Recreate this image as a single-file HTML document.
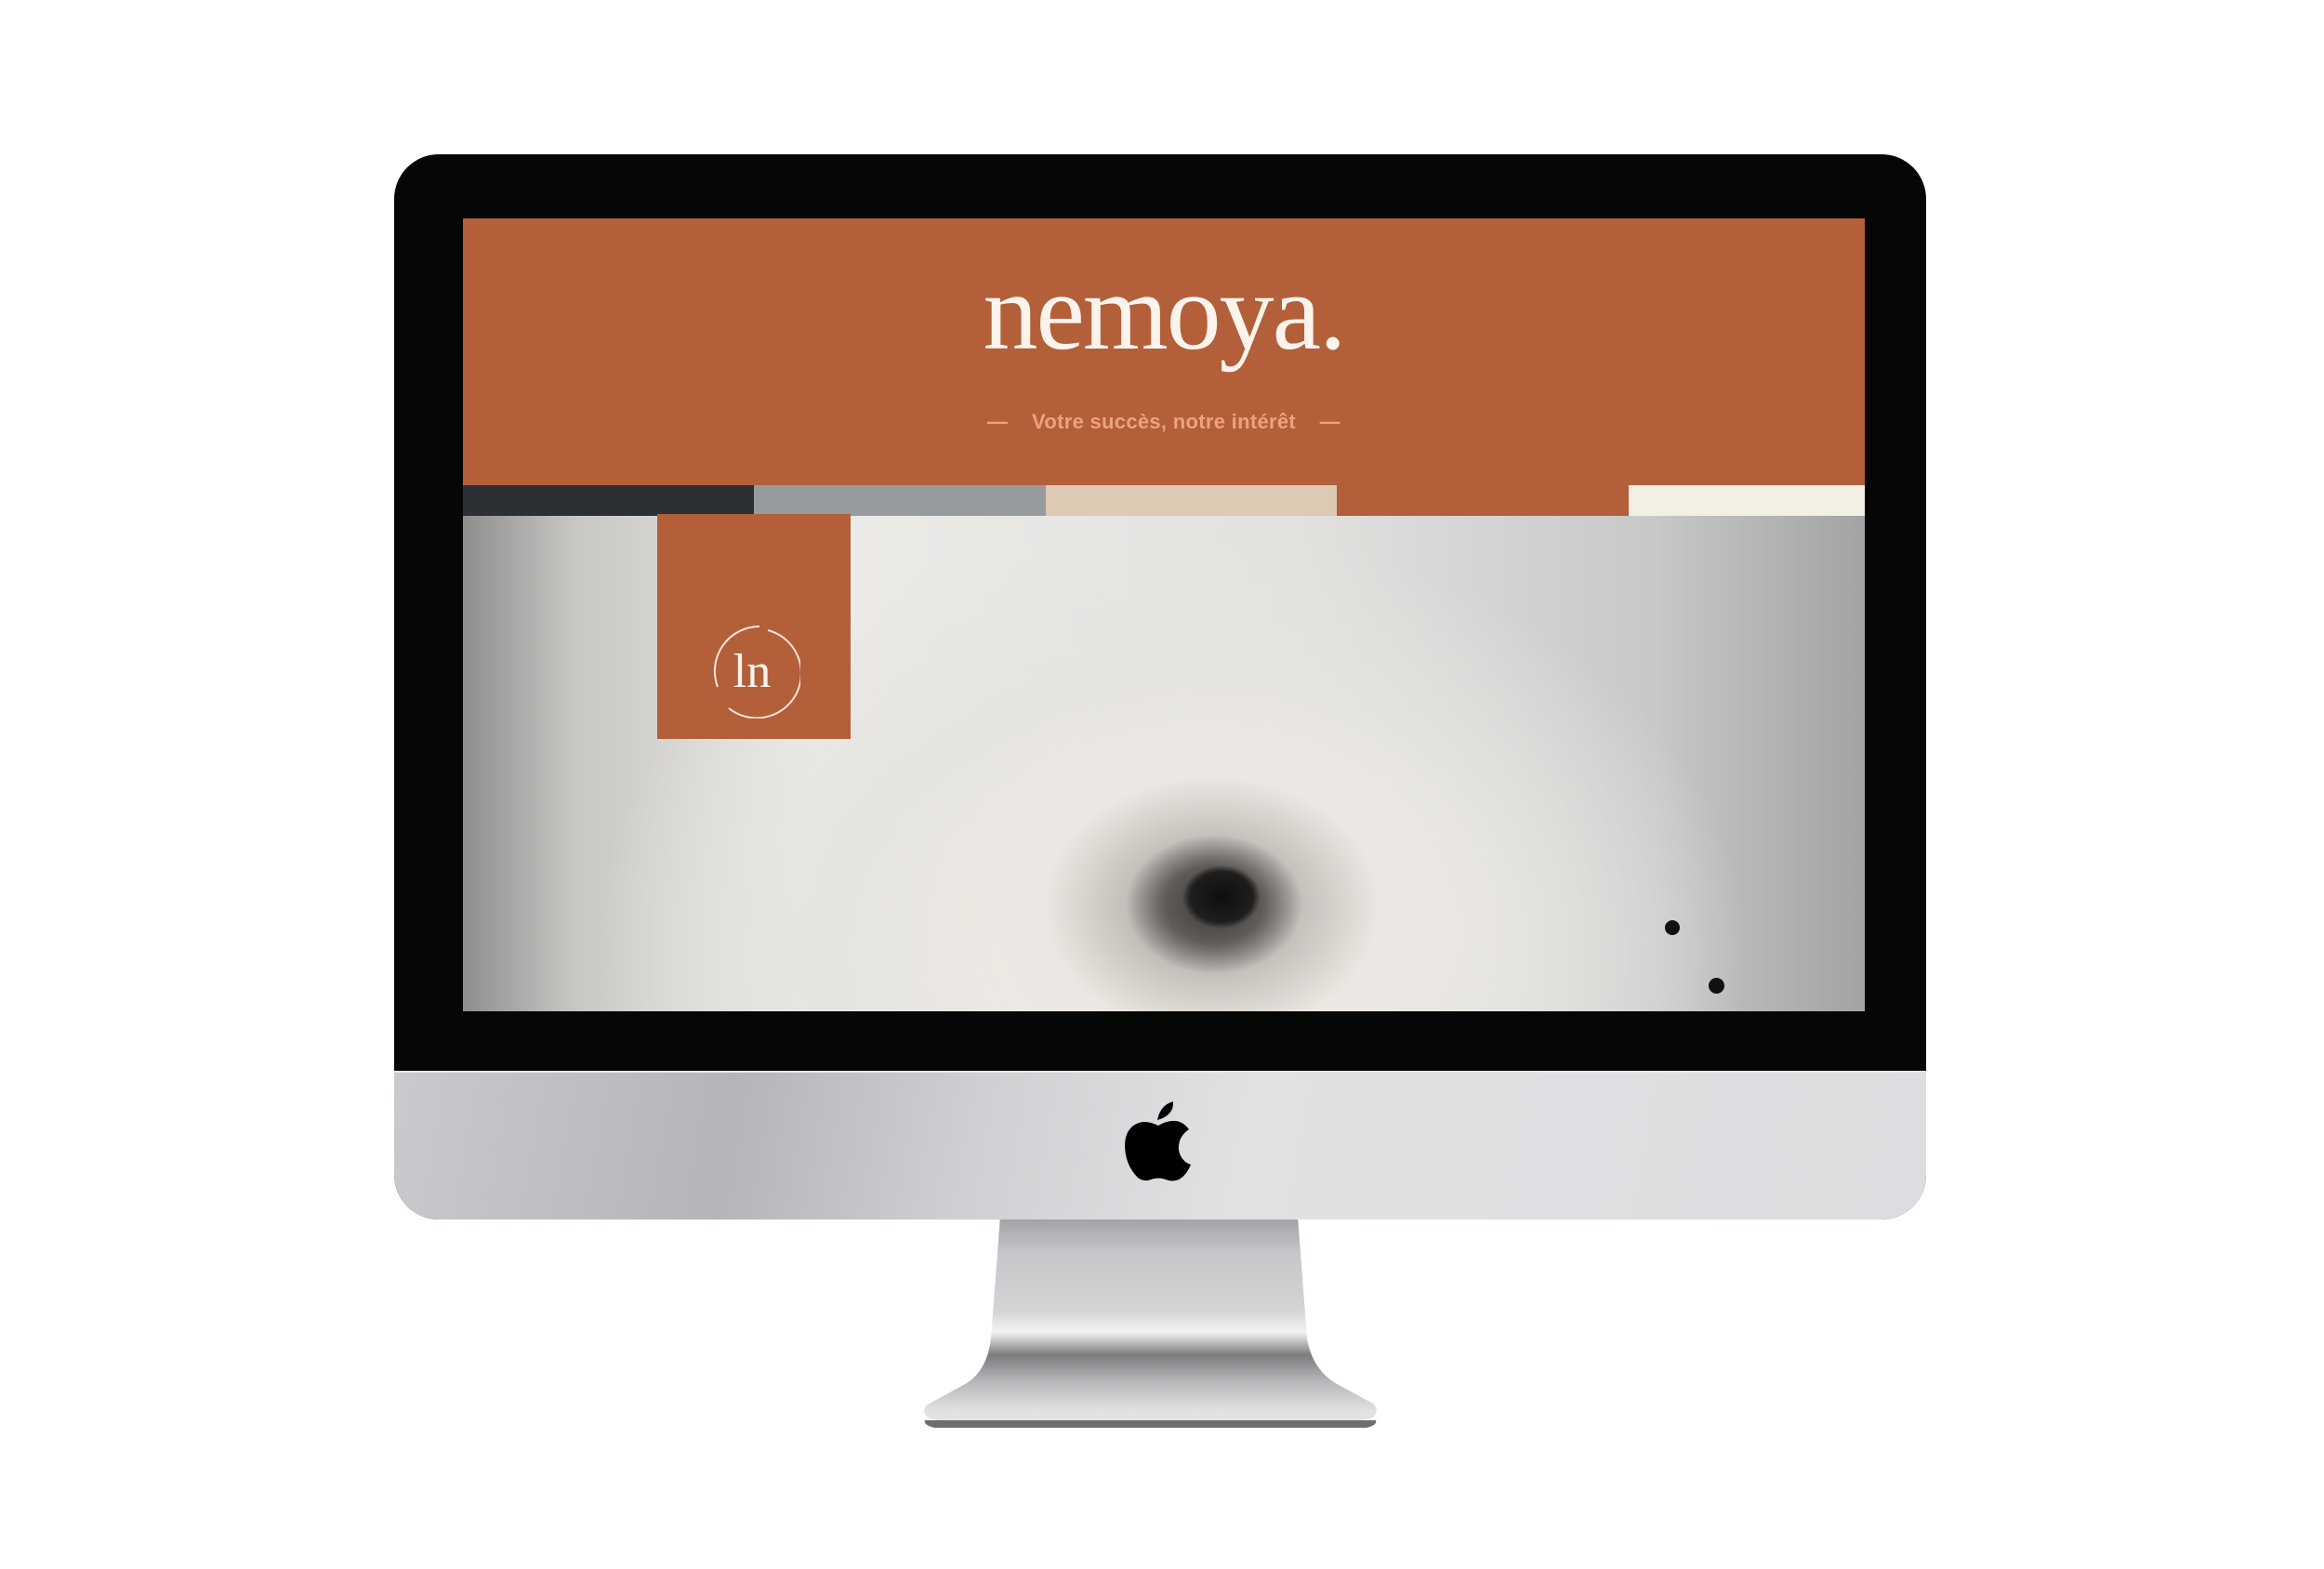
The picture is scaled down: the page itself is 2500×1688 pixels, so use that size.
<!DOCTYPE html>
<html><head><meta charset="utf-8"><style>
html,body{margin:0;padding:0;background:#fff;}
body{width:2500px;height:1688px;position:relative;overflow:hidden;font-family:"Liberation Sans",sans-serif;}
.abs{position:absolute;}
</style></head><body>

<svg class="abs" style="left:0;top:0" width="2500" height="1688">
<defs>
<linearGradient id="sg" x1="0" y1="1308" x2="0" y2="1535" gradientUnits="userSpaceOnUse">
<stop offset="0" stop-color="#9fa0a4"/>
<stop offset="0.18" stop-color="#c6c7ca"/>
<stop offset="0.45" stop-color="#d3d4d6"/>
<stop offset="0.55" stop-color="#f3f3f3"/>
<stop offset="0.66" stop-color="#7b7c7e"/>
<stop offset="0.78" stop-color="#b4b5b8"/>
<stop offset="0.92" stop-color="#e0e0e2"/>
<stop offset="1" stop-color="#e6e6e6"/>
</linearGradient>
</defs>
<path d="M995,1528 L1480,1528 Q1482,1533 1470,1536 L1005,1536 Q993,1533 995,1528Z" fill="#6e6e6e"/>
<path d="M1076,1308 L1396,1308 L1406,1440 Q1412,1475 1440,1490 L1477,1510 Q1484,1516 1478,1524 Q1472,1528 1460,1528 L1012,1528 Q1000,1528 995,1522 Q992,1514 1000,1510 L1040,1488 Q1062,1474 1066,1440 Z" fill="url(#sg)"/>
</svg>

<div class="abs" style="left:424px;top:166px;width:1648px;height:1146px;border-radius:48px;background:#060606;overflow:hidden;">
  <div class="abs" style="left:0;top:986px;width:1648px;height:160px;background:linear-gradient(100deg,#c9cacd 0%,#b4b5b9 22%,#cfd0d3 38%,#e0e1e3 55%,#dcdde0 100%);border-top:2px solid #e6e6e6;"></div>
</div>
<svg class="abs" style="left:1210px;top:1185px" width="72" height="86" viewBox="0 0 72 86">
<path d="M35,20 Q38,4 52,0 Q53,15 35,20Z" fill="#000"/>
<path d="M36,26 Q46,20 55,21 Q63,22 69,30 Q57,38 58,52 Q60,64 71,68 Q66,80 58,84 Q51,87 44,84 Q36,81 28,84 Q21,87 14,82 Q0,68 0,46 Q1,28 15,23 Q24,20 36,26Z" fill="#000"/>
</svg>

<div class="abs" style="left:498px;top:235px;width:1508px;height:853px;overflow:hidden;background:#d8d6d2;">
  <div class="abs" style="left:0;top:0;width:1508px;height:320px;background:#b35f3a;"></div>
  <div class="abs" style="left:0;top:42px;width:1508px;text-align:center;font-family:'Liberation Serif',serif;font-size:118px;line-height:1;color:#fbf3ec;letter-spacing:-2px;">nemoya.</div>
  <div class="abs" style="left:0;top:206px;width:1508px;text-align:center;font-weight:bold;font-size:22px;color:#eba47c;white-space:pre;letter-spacing:0.3px;">—    Votre succès, notre intérêt    —</div>
  <div class="abs" style="left:0;top:287px;width:313px;height:33px;background:#2c2f33"></div>
  <div class="abs" style="left:313px;top:287px;width:314px;height:33px;background:#979b9d"></div>
  <div class="abs" style="left:627px;top:287px;width:313px;height:33px;background:#dccab4"></div>
  <div class="abs" style="left:1254px;top:287px;width:254px;height:33px;background:#f4efe4"></div>
  <div class="abs" style="left:0;top:320px;width:1508px;height:533px;overflow:hidden;
    background:
      radial-gradient(ellipse 42px 34px at 816px 410px,#0e0e0e 0%,#1e1e1e 80%,rgba(40,40,40,0) 100%),
      radial-gradient(ellipse 95px 75px at 808px 418px,#3a3836 0%,#5e5b58 55%,rgba(200,195,190,0) 100%),
      radial-gradient(ellipse 180px 140px at 806px 420px,#9a9590 0%,rgba(235,230,225,0) 100%),
      radial-gradient(ellipse 330px 260px at 800px 430px,#ebe5df 0%,#ece7e2 60%,rgba(225,222,218,0) 100%),
      radial-gradient(ellipse 620px 460px at 760px 470px,#f0ede9 0%,#e6e4e0 60%,rgba(200,200,200,0) 100%),
      linear-gradient(90deg,#8e8e8e 0%,#c9c7c3 8%,#ecebe8 25%,#e2e1de 60%,#c8c8c8 85%,#a3a3a3 100%);">
    <div class="abs" style="left:1293px;top:435px;width:16px;height:16px;border-radius:50%;background:#111"></div>
    <div class="abs" style="left:1340px;top:497px;width:17px;height:17px;border-radius:50%;background:#111"></div>
  </div>
  <div class="abs" style="left:209px;top:318px;width:208px;height:242px;background:#b35f3a;">
    <svg class="abs" style="left:50px;top:116px" width="104" height="104" viewBox="0 0 104 104">
      <path d="M69,9 A48,48 0 1,1 27,93" fill="none" stroke="#f6e6dc" stroke-width="2"/>
      <path d="M15,70 A48,48 0 0,1 60,5" fill="none" stroke="#f6e6dc" stroke-width="2"/>
      <text x="52" y="70" text-anchor="middle" font-family="Liberation Serif,serif" font-size="52" fill="#fbf3ec">ln</text>
    </svg>
  </div>
</div>
</body></html>
